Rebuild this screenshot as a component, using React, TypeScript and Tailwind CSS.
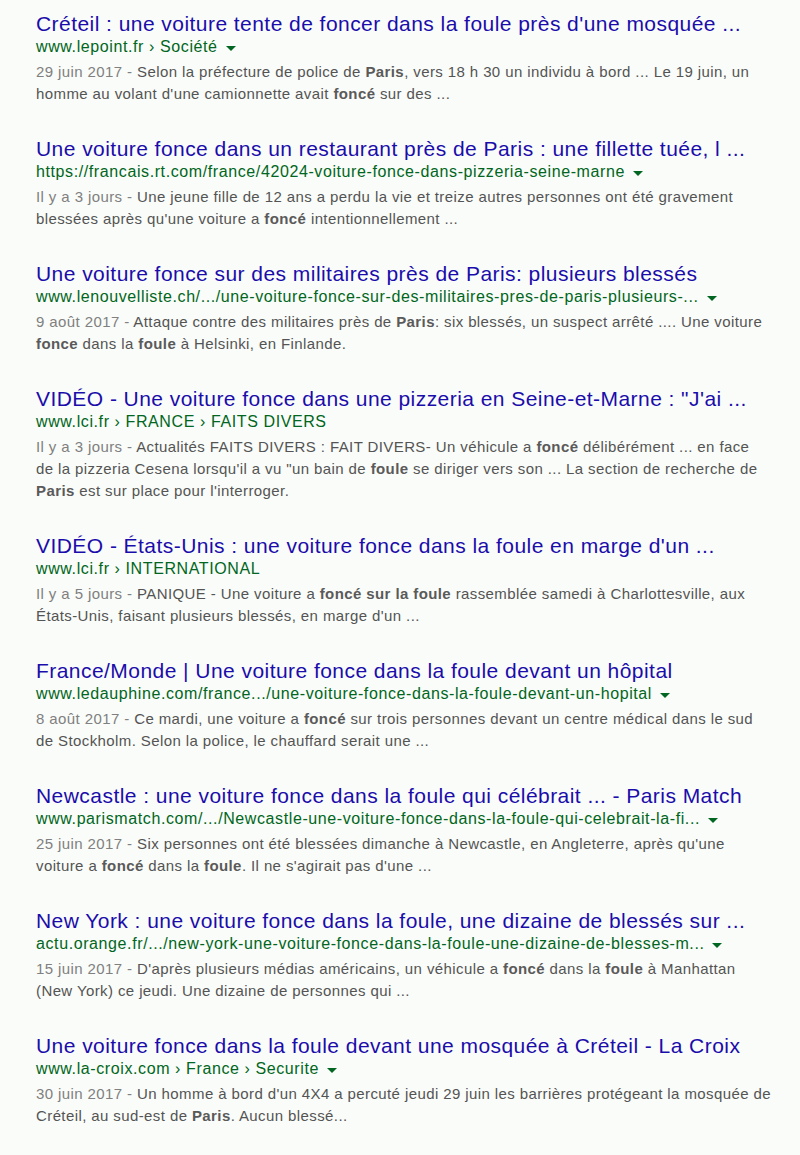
import React from "react";

type Result = {
  title: string;
  url: string;
  arrow: boolean;
  date: string;
  lines: string[];
};

const results: Result[] = [
  {
    title: "Créteil : une voiture tente de foncer dans la foule près d'une mosquée ...",
    url: "www.lepoint.fr › Société",
    arrow: true,
    date: "29 juin 2017",
    lines: [
      "Selon la préfecture de police de **Paris**, vers 18 h 30 un individu à bord ... Le 19 juin, un",
      "homme au volant d'une camionnette avait **foncé** sur des ...",
    ],
  },
  {
    title: "Une voiture fonce dans un restaurant près de Paris : une fillette tuée, l ...",
    url: "https://francais.rt.com/france/42024-voiture-fonce-dans-pizzeria-seine-marne",
    arrow: true,
    date: "Il y a 3 jours",
    lines: [
      "Une jeune fille de 12 ans a perdu la vie et treize autres personnes ont été gravement",
      "blessées après qu'une voiture a **foncé** intentionnellement ...",
    ],
  },
  {
    title: "Une voiture fonce sur des militaires près de Paris: plusieurs blessés",
    url: "www.lenouvelliste.ch/.../une-voiture-fonce-sur-des-militaires-pres-de-paris-plusieurs-...",
    arrow: true,
    date: "9 août 2017",
    lines: [
      "Attaque contre des militaires près de **Paris**: six blessés, un suspect arrêté .... Une voiture",
      "**fonce** dans la **foule** à Helsinki, en Finlande.",
    ],
  },
  {
    title: "VIDÉO - Une voiture fonce dans une pizzeria en Seine-et-Marne : \"J'ai ...",
    url: "www.lci.fr › FRANCE › FAITS DIVERS",
    arrow: false,
    date: "Il y a 3 jours",
    lines: [
      "Actualités FAITS DIVERS : FAIT DIVERS- Un véhicule a **foncé** délibérément ... en face",
      "de la pizzeria Cesena lorsqu'il a vu \"un bain de **foule** se diriger vers son ... La section de recherche de",
      "**Paris** est sur place pour l'interroger.",
    ],
  },
  {
    title: "VIDÉO - États-Unis : une voiture fonce dans la foule en marge d'un ...",
    url: "www.lci.fr › INTERNATIONAL",
    arrow: false,
    date: "Il y a 5 jours",
    lines: [
      "PANIQUE - Une voiture a **foncé sur la foule** rassemblée samedi à Charlottesville, aux",
      "États-Unis, faisant plusieurs blessés, en marge d'un ...",
    ],
  },
  {
    title: "France/Monde | Une voiture fonce dans la foule devant un hôpital",
    url: "www.ledauphine.com/france.../une-voiture-fonce-dans-la-foule-devant-un-hopital",
    arrow: true,
    date: "8 août 2017",
    lines: [
      "Ce mardi, une voiture a **foncé** sur trois personnes devant un centre médical dans le sud",
      "de Stockholm. Selon la police, le chauffard serait une ...",
    ],
  },
  {
    title: "Newcastle : une voiture fonce dans la foule qui célébrait ... - Paris Match",
    url: "www.parismatch.com/.../Newcastle-une-voiture-fonce-dans-la-foule-qui-celebrait-la-fi...",
    arrow: true,
    date: "25 juin 2017",
    lines: [
      "Six personnes ont été blessées dimanche à Newcastle, en Angleterre, après qu'une",
      "voiture a **foncé** dans la **foule**. Il ne s'agirait pas d'une ...",
    ],
  },
  {
    title: "New York : une voiture fonce dans la foule, une dizaine de blessés sur ...",
    url: "actu.orange.fr/.../new-york-une-voiture-fonce-dans-la-foule-une-dizaine-de-blesses-m...",
    arrow: true,
    date: "15 juin 2017",
    lines: [
      "D'après plusieurs médias américains, un véhicule a **foncé** dans la **foule** à Manhattan",
      "(New York) ce jeudi. Une dizaine de personnes qui ...",
    ],
  },
  {
    title: "Une voiture fonce dans la foule devant une mosquée à Créteil - La Croix",
    url: "www.la-croix.com › France › Securite",
    arrow: true,
    date: "30 juin 2017",
    lines: [
      "Un homme à bord d'un 4X4 a percuté jeudi 29 juin les barrières protégeant la mosquée de",
      "Créteil, au sud-est de **Paris**. Aucun blessé...",
    ],
  },
];

// split "**bold**" markers into spans
const Line = ({ text }: { text: string }) => (
  <>
    {text.split("**").map((part, i) =>
      i % 2 === 1 ? (
        <b key={i} className="font-bold text-[#5a5a5a]">
          {part}
        </b>
      ) : (
        <span key={i}>{part}</span>
      )
    )}
  </>
);

const SearchResult = ({ r }: { r: Result }) => (
  <div className="flex flex-col">
    <a className="text-[21px] leading-[24px] tracking-[0.45px] text-[#1a0dab] whitespace-nowrap">{r.title}</a>
    <div className="flex items-center text-[16px] leading-[22px] tracking-[0.6px] text-[#006621] whitespace-nowrap">
      <span>{r.url}</span>
      {r.arrow && (
        <span className="ml-[8px] mt-[2px] w-0 h-0 border-l-[5px] border-r-[5px] border-t-[5px] border-l-transparent border-r-transparent border-t-[#006621]" />
      )}
    </div>
    <div className="mt-[3px] text-[15px] leading-[22px] tracking-[0.4px] text-[#545454] whitespace-nowrap">
      {r.lines.map((l, i) => (
        <div key={i}>
          {i === 0 && <span className="text-[#808080]">{r.date} - </span>}
          <Line text={l} />
        </div>
      ))}
    </div>
  </div>
);

export default function App() {
  return (
    <div className="min-h-[1155px] w-[800px] bg-[#fafcf9] pl-[36px] pt-[12px] font-['Liberation_Sans',Arial,sans-serif]">
      <div className="flex flex-col gap-[32px]">
        {results.map((r, i) => (
          <SearchResult key={i} r={r} />
        ))}
      </div>
    </div>
  );
}
